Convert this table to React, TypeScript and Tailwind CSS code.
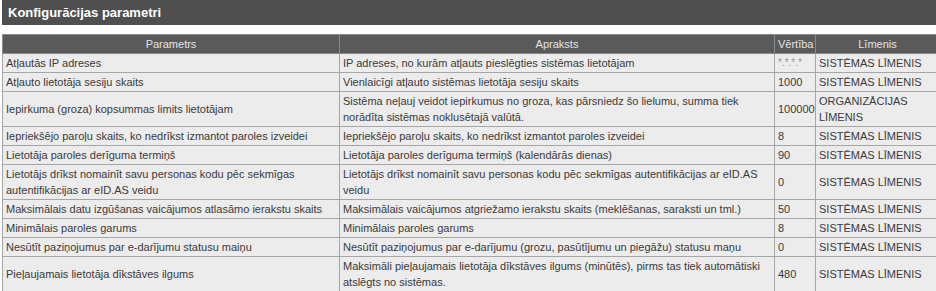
import React from 'react';

type Row = { param: string; desc: string; value: string; level: string };

const rows: Row[] = [
    { param: 'Atļautās IP adreses', desc: 'IP adreses, no kurām atļauts pieslēgties sistēmas lietotājam', value: '*.*.*.*', level: 'SISTĒMAS LĪMENIS' },
    { param: 'Atļauto lietotāja sesiju skaits', desc: 'Vienlaicīgi atļauto sistēmas lietotāja sesiju skaits', value: '1000', level: 'SISTĒMAS LĪMENIS' },
    { param: 'Iepirkuma (groza) kopsummas limits lietotājam', desc: 'Sistēma neļauj veidot iepirkumus no groza, kas pārsniedz šo lielumu, summa tiek norādīta sistēmas noklusētajā valūtā.', value: '100000', level: 'ORGANIZĀCIJAS LĪMENIS' },
    { param: 'Iepriekšējo paroļu skaits, ko nedrīkst izmantot paroles izveidei', desc: 'Iepriekšējo paroļu skaits, ko nedrīkst izmantot paroles izveidei', value: '8', level: 'SISTĒMAS LĪMENIS' },
    { param: 'Lietotāja paroles derīguma termiņš', desc: 'Lietotāja paroles derīguma termiņš (kalendārās dienas)', value: '90', level: 'SISTĒMAS LĪMENIS' },
    { param: 'Lietotājs drīkst nomainīt savu personas kodu pēc sekmīgas autentifikācijas ar eID.AS veidu', desc: 'Lietotājs drīkst nomainīt savu personas kodu pēc sekmīgas autentifikācijas ar eID.AS veidu', value: '0', level: 'SISTĒMAS LĪMENIS' },
    { param: 'Maksimālais datu izgūšanas vaicājumos atlasāmo ierakstu skaits', desc: 'Maksimālais vaicājumos atgriežamo ierakstu skaits (meklēšanas, saraksti un tml.)', value: '50', level: 'SISTĒMAS LĪMENIS' },
    { param: 'Minimālais paroles garums', desc: 'Minimālais paroles garums', value: '8', level: 'SISTĒMAS LĪMENIS' },
    { param: 'Nesūtīt paziņojumus par e-darījumu statusu maiņu', desc: 'Nesūtīt paziņojumus par e-darījumu (grozu, pasūtījumu un piegāžu) statusu maņu', value: '0', level: 'SISTĒMAS LĪMENIS' },
    { param: 'Pieļaujamais lietotāja dīkstāves ilgums', desc: 'Maksimāli pieļaujamais lietotāja dīkstāves ilgums (minūtēs), pirms tas tiek automātiski atslēgts no sistēmas.', value: '480', level: 'SISTĒMAS LĪMENIS' },
];

const th = 'border border-[#8a8a8a] bg-[#5a5a5a] text-[#e4e4e4] font-normal text-center px-[3px] py-px leading-4';
const td = 'border border-[#a6a6a6] px-[3px] py-px leading-4 align-middle';

export default function App() {
    return (
        <div className="w-[936px] h-[291px] overflow-hidden bg-white pl-[2px] font-['Liberation_Sans',Arial,sans-serif] text-[11px] text-[#3a3a3a]">
            <div className="h-[25px] bg-[#4f4f4f] flex items-center pl-[6px]">
                <h1 className="text-white font-bold text-[13px]">Konfigurācijas parametri</h1>
            </div>
            <table className="mt-[9px] w-[937px] table-fixed border-collapse">
                <colgroup>
                    <col className="w-[337px]" />
                    <col className="w-[435px]" />
                    <col className="w-[41px]" />
                    <col className="w-[124px]" />
                </colgroup>
                <thead>
                    <tr>
                        <th className={th}>Parametrs</th>
                        <th className={th}>Apraksts</th>
                        <th className={th}>Vērtība</th>
                        <th className={th}>Līmenis</th>
                    </tr>
                </thead>
                <tbody className="bg-[#ececec]">
                    {rows.map((r, i) => (
                        <tr key={i}>
                            <td className={td}>{r.param}</td>
                            <td className={td}>{r.desc}</td>
                            <td className={td + (r.value.startsWith('*') ? ' text-[#999] text-[10px]' : '')}>{r.value}</td>
                            <td className={td}>{r.level}</td>
                        </tr>
                    ))}
                </tbody>
            </table>
        </div>
    );
}
